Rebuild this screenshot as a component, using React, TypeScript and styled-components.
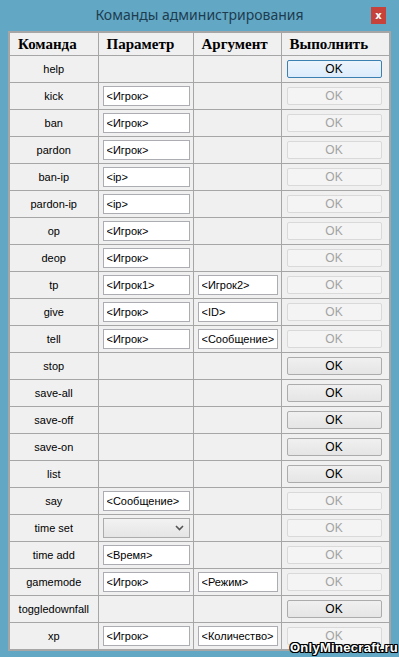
import React from 'react'
import styled, { createGlobalStyle } from 'styled-components'

type Row = {
  cmd: string
  param?: string
  arg?: string
  select?: boolean
  enabled?: boolean
  focused?: boolean
}

const rows: Row[] = [
  { cmd: 'help', enabled: true, focused: true },
  { cmd: 'kick', param: '<Игрок>' },
  { cmd: 'ban', param: '<Игрок>' },
  { cmd: 'pardon', param: '<Игрок>' },
  { cmd: 'ban-ip', param: '<ip>' },
  { cmd: 'pardon-ip', param: '<ip>' },
  { cmd: 'op', param: '<Игрок>' },
  { cmd: 'deop', param: '<Игрок>' },
  { cmd: 'tp', param: '<Игрок1>', arg: '<Игрок2>' },
  { cmd: 'give', param: '<Игрок>', arg: '<ID>' },
  { cmd: 'tell', param: '<Игрок>', arg: '<Сообщение>' },
  { cmd: 'stop', enabled: true },
  { cmd: 'save-all', enabled: true },
  { cmd: 'save-off', enabled: true },
  { cmd: 'save-on', enabled: true },
  { cmd: 'list', enabled: true },
  { cmd: 'say', param: '<Сообщение>' },
  { cmd: 'time set', select: true },
  { cmd: 'time add', param: '<Время>' },
  { cmd: 'gamemode', param: '<Игрок>', arg: '<Режим>' },
  { cmd: 'toggledownfall', enabled: true },
  { cmd: 'xp', param: '<Игрок>', arg: '<Количество>' },
]

const App = () => {
  return (
    <>
      <GlobalStyle />
      <Window>
        <TitleBar>
          <Title>Команды администрирования</Title>
          <CloseButton>x</CloseButton>
        </TitleBar>
        <Table>
          <colgroup>
            <col style={{ width: 89 }} />
            <col style={{ width: 95 }} />
            <col style={{ width: 88 }} />
            <col />
          </colgroup>
          <thead>
            <tr>
              <HeadCell>Команда</HeadCell>
              <HeadCell>Параметр</HeadCell>
              <HeadCell>Аргумент</HeadCell>
              <HeadCell>Выполнить</HeadCell>
            </tr>
          </thead>
          <tbody>
            {rows.map((r) => (
              <tr key={r.cmd}>
                <CmdCell>{r.cmd}</CmdCell>
                <Cell>
                  {r.param && <TextField defaultValue={r.param} />}
                  {r.select && (
                    <SelectBox>
                      <svg width="9" height="6" viewBox="0 0 9 6">
                        <path d="M1 1 L4.5 4.5 L8 1" stroke="#555" strokeWidth="1.6" fill="none" />
                      </svg>
                    </SelectBox>
                  )}
                </Cell>
                <Cell>{r.arg && <TextField $narrow defaultValue={r.arg} />}</Cell>
                <Cell>
                  <OkButton disabled={!r.enabled} $focused={r.focused}>
                    OK
                  </OkButton>
                </Cell>
              </tr>
            ))}
          </tbody>
        </Table>
        <Watermark>OnlyMinecraft.ru</Watermark>
      </Window>
    </>
  )
}

export default App

const GlobalStyle = createGlobalStyle`
  html, body {
    margin: 0;
    padding: 0;
    background: #ffffff;
  }
`

const Window = styled.div`
  position: relative;
  width: 399px;
  height: 657px;
  box-sizing: border-box;
  background: #62a8c5;
  padding: 0 8px 5px 8px;
  display: flex;
  flex-direction: column;
  font-family: 'Liberation Sans', Arial, sans-serif;
`

const TitleBar = styled.div`
  position: relative;
  height: 31px;
  display: flex;
  align-items: center;
  justify-content: center;
`

const Title = styled.div`
  font-family: 'Noto Sans', 'Open Sans', sans-serif;
  font-size: 14px;
  color: #1e3c50;
  margin-top: -2px;
`

const CloseButton = styled.div`
  position: absolute;
  right: 5px;
  top: 7px;
  width: 15px;
  height: 17px;
  background: #c7423b;
  color: #ffffff;
  font-family: 'DejaVu Sans', sans-serif;
  font-weight: bold;
  font-size: 10px;
  display: flex;
  align-items: center;
  justify-content: center;
  line-height: 1;
`

const Table = styled.table`
  width: 383px;
  table-layout: fixed;
  border-collapse: collapse;
  background: #f0f0f0;
  border: 2px solid #a6a6a6;
`

const HeadCell = styled.th`
  height: 22px;
  padding: 0 0 0 8px;
  text-align: left;
  font-family: 'Liberation Serif', 'DejaVu Serif', serif;
  font-weight: bold;
  font-size: 15px;
  color: #000;
  border: 1px solid #a6a6a6;
`

const Cell = styled.td`
  height: 26px;
  padding: 0 0 0 4px;
  border: 1px solid #a6a6a6;
  vertical-align: middle;
`

const CmdCell = styled(Cell)`
  padding: 0;
  text-align: center;
  font-size: 11px;
  color: #000;
`

const TextField = styled.input<{ $narrow?: boolean }>`
  display: block;
  box-sizing: border-box;
  width: ${({ $narrow }) => ($narrow ? '80px' : '87px')};
  height: 20px;
  padding: 0 3px;
  border: 1px solid #abadb3;
  background: #ffffff;
  font-family: 'Liberation Sans', Arial, sans-serif;
  font-size: 11px;
  color: #000;
  outline: none;
`

const SelectBox = styled.div`
  box-sizing: border-box;
  width: 87px;
  height: 20px;
  border: 1px solid #acacac;
  background: linear-gradient(#f2f2f2, #e5e5e5);
  display: flex;
  align-items: center;
  justify-content: flex-end;
  padding-right: 5px;
`

const OkButton = styled.button<{ $focused?: boolean }>`
  display: block;
  box-sizing: border-box;
  width: 95px;
  height: 18px;
  margin-left: 1px;
  padding: 0;
  font-family: 'Liberation Sans', Arial, sans-serif;
  font-size: 12px;
  color: #000;
  border: 1px solid ${({ $focused }) => ($focused ? '#3c7fb1' : '#acacac')};
  background: ${({ $focused }) =>
    $focused ? 'linear-gradient(#ecf4fc, #dcecfc)' : 'linear-gradient(#f0f0f0, #e5e5e5)'};
  border-radius: 2px;

  &:disabled {
    color: #a3a3a3;
    border-color: #d9d9d9;
    background: #f4f4f4;
  }
`

const Watermark = styled.div`
  position: absolute;
  right: 1px;
  bottom: 3px;
  font-family: 'Liberation Sans', Arial, sans-serif;
  font-weight: bold;
  font-size: 13px;
  line-height: 13px;
  color: #ffffff;
  letter-spacing: 0.3px;
  text-shadow: 1px 0 0 #000, -1px 0 0 #000, 0 1px 0 #000, 0 -1px 0 #000, 1px 1px 0 #000, -1px -1px 0 #000,
    1px -1px 0 #000, -1px 1px 0 #000;
`
